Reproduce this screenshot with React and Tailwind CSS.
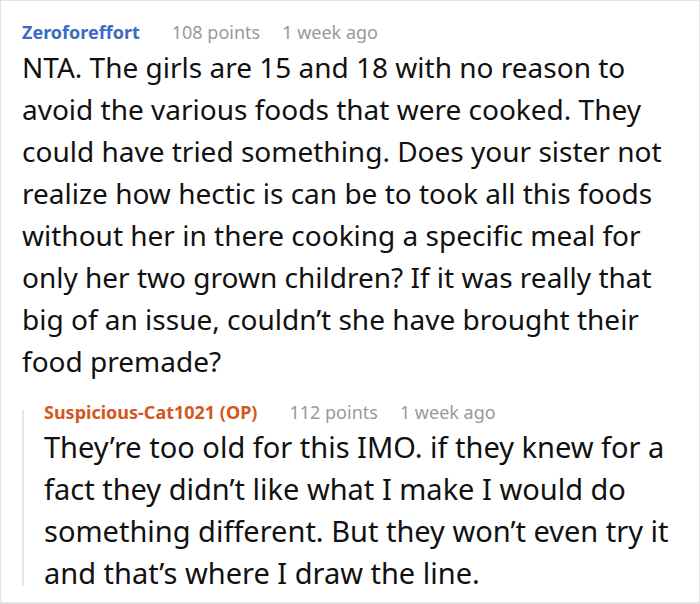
const comment = {
  author: 'Zeroforeffort',
  points: 108,
  age: '1 week ago',
  body: 'NTA. The girls are 15 and 18 with no reason to avoid the various foods that were cooked. They could have tried something. Does your sister not realize how hectic is can be to took all this foods without her in there cooking a specific meal for only her two grown children? If it was really that big of an issue, couldn’t she have brought their food premade?',
}

const reply = {
  author: 'Suspicious-Cat1021 (OP)',
  points: 112,
  age: '1 week ago',
  body: 'They’re too old for this IMO. if they knew for a fact they didn’t like what I make I would do something different. But they won’t even try it and that’s where I draw the line.',
}

function Meta({ author, points, age, color }) {
  return (
    <div className="flex items-baseline text-[18px] leading-6">
      <span className={`font-bold ${color}`}>{author}</span>
      <span className="ml-8 text-[#999]">{points} points</span>
      <span className="ml-[22px] text-[#999]">{age}</span>
    </div>
  )
}

export default function App() {
  return (
    <div
      className="w-[700px] h-[604px] bg-white border border-b-2 border-[#e3e3e3] overflow-hidden"
      style={{ fontFamily: '"Noto Sans", sans-serif' }}
    >
      <div className="pl-[21px] pr-4 pt-[19px]">
        <Meta {...comment} color="text-[#3a6cc0]" />
        <p className="mt-[2px] text-[28px] leading-[42px] text-[#111]">{comment.body}</p>

        <div className="mt-[18px] flex">
          <div className="w-[2px] shrink-0 bg-[#e6e6e6] mt-[10px] mb-[8px]" />
          <div className="pl-[20px]">
            <Meta {...reply} color="text-[#d4561c]" />
            <p className="mt-[2px] text-[29px] leading-[42px] text-[#111]">{reply.body}</p>
          </div>
        </div>
      </div>
    </div>
  )
}
